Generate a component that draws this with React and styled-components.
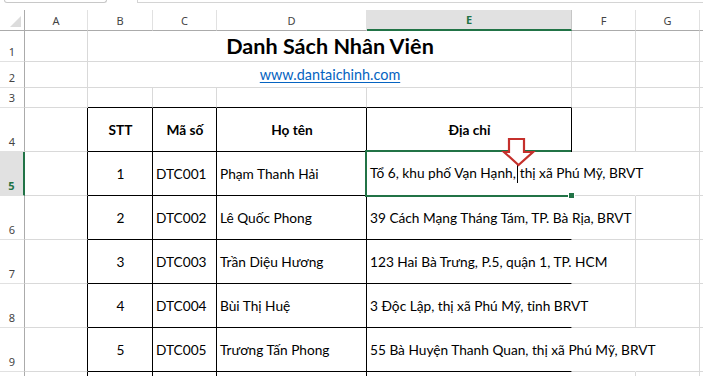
import React from 'react';
import styled, { createGlobalStyle } from 'styled-components';

const GRID = '#d9d9d9';
const HEAD_LINE = '#ababab';
const GREEN = '#217346';
const INK = '#000';
const CELL_FONT = 'Lato, "Noto Sans", "Liberation Sans", sans-serif';
const UI_FONT = '"Noto Sans", "Open Sans", "Liberation Sans", sans-serif';

const GlobalStyle = createGlobalStyle`
  html, body { margin: 0; padding: 0; background: #fff; overflow: hidden; }
  body { font-family: ${CELL_FONT}; }
`;

const Page = styled.div`
  width: 703px;
  height: 376px;
  overflow: hidden;
  background: #fff;
`;

const FormulaStrip = styled.div`
  height: 10px;
  display: flex;
  align-items: flex-start;
  gap: 30px;
  padding-left: 4px;
  box-sizing: border-box;
`;

const NameBox = styled.div`
  width: 101px;
  height: 2px;
  border: 1px solid #c8c8c8;
  border-top: none;
  border-radius: 0 0 3px 3px;
`;

const FormulaInput = styled.div`
  flex: 1;
  height: 2px;
  border: 1px solid #d4d4d4;
  border-top: none;
  border-right: none;
`;

const Sheet = styled.div`
  position: relative;
  display: grid;
  grid-template-columns: 25px 63px 65px 64px 150px 205px 64px 64px 1fr;
  grid-template-rows: 21px 31px 26px 20px repeat(7, 44px);
`;

const Corner = styled.div`
  position: relative;
  box-sizing: border-box;
  border-right: 1px solid ${HEAD_LINE};
  border-bottom: 1px solid ${HEAD_LINE};
  &::after {
    content: '';
    position: absolute;
    right: 3px;
    bottom: 3px;
    border-style: solid;
    border-width: 0 0 11px 11px;
    border-color: transparent transparent #dcdcdc transparent;
  }
`;

const ColHeader = styled.div`
  box-sizing: border-box;
  display: flex;
  align-items: center;
  justify-content: center;
  font-family: ${UI_FONT};
  font-size: 11px;
  color: ${(p) => (p.$selected ? GREEN : '#444')};
  font-weight: ${(p) => (p.$selected ? 700 : 400)};
  background: ${(p) => (p.$selected ? '#e1e1e1' : '#fff')};
  border-right: 1px solid ${(p) => (p.$selected ? '#c6c6c6' : '#e1e1e1')};
  border-bottom: ${(p) => (p.$selected ? `2px solid ${GREEN}` : `1px solid ${HEAD_LINE}`)};
`;

const RowHeader = styled.div`
  box-sizing: border-box;
  display: flex;
  align-items: flex-end;
  justify-content: center;
  padding-bottom: 2px;
  font-family: ${UI_FONT};
  font-size: 11px;
  line-height: 14px;
  color: ${(p) => (p.$selected ? GREEN : '#444')};
  font-weight: ${(p) => (p.$selected ? 700 : 400)};
  background: ${(p) => (p.$selected ? '#e1e1e1' : '#fff')};
  border-right: ${(p) => (p.$selected ? `2px solid ${GREEN}` : `1px solid ${HEAD_LINE}`)};
  border-bottom: 1px solid #e1e1e1;
`;

const Cell = styled.div`
  grid-column: span ${(p) => p.$span || 1};
  position: relative;
  z-index: ${(p) => p.$z || 'auto'};
  box-sizing: border-box;
  display: flex;
  align-items: center;
  justify-content: ${(p) => (p.$align === 'center' ? 'center' : 'flex-start')};
  padding: 0 2px 0 3px;
  border-right: 1px solid ${(p) => p.$rb || GRID};
  border-bottom: 1px solid ${(p) => p.$bb || GRID};
  font-family: ${CELL_FONT};
  font-size: 13.7px;
  font-weight: ${(p) => (p.$bold ? 700 : 400)};
  color: ${INK};
  white-space: nowrap;
  overflow: ${(p) => (p.$overflow ? 'visible' : 'hidden')};
`;

const Title = styled.span`
  font-size: 21.6px;
  font-weight: 700;
  color: #000;
`;

const Link = styled.span`
  font-size: 14.4px;
  color: #0563c1;
  text-decoration: underline;
  text-underline-offset: 2px;
`;

const Caret = styled.span`
  display: inline-block;
  width: 1px;
  height: 18px;
  margin: 0 2px 0 1px;
  background: #000;
  vertical-align: middle;
`;

const Selection = styled.div`
  position: absolute;
  top: -2px;
  left: -2px;
  right: 0;
  bottom: -2px;
  border: 2px solid ${GREEN};
  border-right: none;
  pointer-events: none;
`;

const FillHandle = styled.div`
  position: absolute;
  right: -4px;
  bottom: -4px;
  width: 5px;
  height: 5px;
  background: ${GREEN};
  border: 1px solid #fff;
`;

const ArrowMark = styled.svg`
  position: absolute;
  left: 500px;
  top: 127px;
  z-index: 5;
`;

const people = [
  ['1', 'DTC001', 'Phạm Thanh Hải', 'Tổ 6, khu phố Vạn Hạnh, thị xã Phú Mỹ, BRVT'],
  ['2', 'DTC002', 'Lê Quốc Phong', '39 Cách Mạng Tháng Tám, TP. Bà Rịa, BRVT'],
  ['3', 'DTC003', 'Trần Diệu Hương', '123 Hai Bà Trưng, P.5, quận 1, TP. HCM'],
  ['4', 'DTC004', 'Bùi Thị Huệ', '3 Độc Lập, thị xã Phú Mỹ, tỉnh BRVT'],
  ['5', 'DTC005', 'Trương Tấn Phong', '55 Bà Huyện Thanh Quan, thị xã Phú Mỹ, BRVT'],
];

const letters = ['A', 'B', 'C', 'D', 'E', 'F', 'G', ''];

function Address({ text, withCaret }) {
  if (!withCaret) return text;
  const [a, b] = text.split('Hạnh, ');
  return (
    <span>
      {a}Hạnh,<Caret />{b}
    </span>
  );
}

export default function App() {
  return (
    <Page>
      <GlobalStyle />
      <FormulaStrip>
        <NameBox />
        <FormulaInput />
      </FormulaStrip>
      <Sheet>
        <Corner />
        {letters.map((l, i) => (
          <ColHeader key={i} $selected={l === 'E'}>{l}</ColHeader>
        ))}

        {/* Row 1 */}
        <RowHeader>1</RowHeader>
        <Cell />
        <Cell $span={4} $align="center"><Title>Danh Sách Nhân Viên</Title></Cell>
        <Cell /><Cell /><Cell />

        {/* Row 2 */}
        <RowHeader>2</RowHeader>
        <Cell />
        <Cell $span={4} $align="center"><Link>www.dantaichinh.com</Link></Cell>
        <Cell /><Cell /><Cell />

        {/* Row 3 */}
        <RowHeader>3</RowHeader>
        <Cell $bb={GRID} />
        <Cell $bb={INK} /><Cell $bb={INK} /><Cell $bb={INK} /><Cell $bb={INK} />
        <Cell /><Cell /><Cell />

        {/* Row 4 - table header */}
        <RowHeader>4</RowHeader>
        <Cell $rb={INK} />
        <Cell $rb={INK} $bb={INK} $align="center" $bold>STT</Cell>
        <Cell $rb={INK} $bb={INK} $align="center" $bold>Mã số</Cell>
        <Cell $rb={INK} $bb={INK} $align="center" $bold>Họ tên</Cell>
        <Cell $rb={INK} $bb={INK} $align="center" $bold>Địa chỉ</Cell>
        <Cell /><Cell /><Cell />

        {people.map((p, i) => {
          const selected = i === 0;
          const longText = i === 0 || i === 4;
          return (
            <React.Fragment key={p[1]}>
              <RowHeader $selected={selected}>{i + 5}</RowHeader>
              <Cell $rb={INK} />
              <Cell $rb={INK} $bb={INK} $align="center">{p[0]}</Cell>
              <Cell $rb={INK} $bb={INK}>{p[1]}</Cell>
              <Cell $rb={INK} $bb={INK}>{p[2]}</Cell>
              <Cell $rb="transparent" $bb={INK} $overflow $z={selected ? 3 : 1}>
                <Address text={p[3]} withCaret={selected} />
                {selected && (
                  <Selection>
                    <FillHandle />
                  </Selection>
                )}
              </Cell>
              <Cell $rb={longText ? 'transparent' : GRID} />
              <Cell /><Cell />
            </React.Fragment>
          );
        })}

        {/* Row 10 - only its top edge is visible */}
        <RowHeader />
        <Cell $rb={INK} />
        <Cell $rb={INK} $bb={INK} />
        <Cell $rb={INK} $bb={INK} />
        <Cell $rb={INK} $bb={INK} />
        <Cell $rb="transparent" $bb={INK} />
        <Cell /><Cell /><Cell />

        <ArrowMark width="36" height="32" viewBox="0 0 36 32">
          <path
            d="M9 2 H24 V15 H33 L18.5 28 L4 15 H9 Z"
            fill="#fff"
            stroke="#c5302c"
            strokeWidth="2.2"
            strokeLinejoin="miter"
          />
        </ArrowMark>
      </Sheet>
    </Page>
  );
}
